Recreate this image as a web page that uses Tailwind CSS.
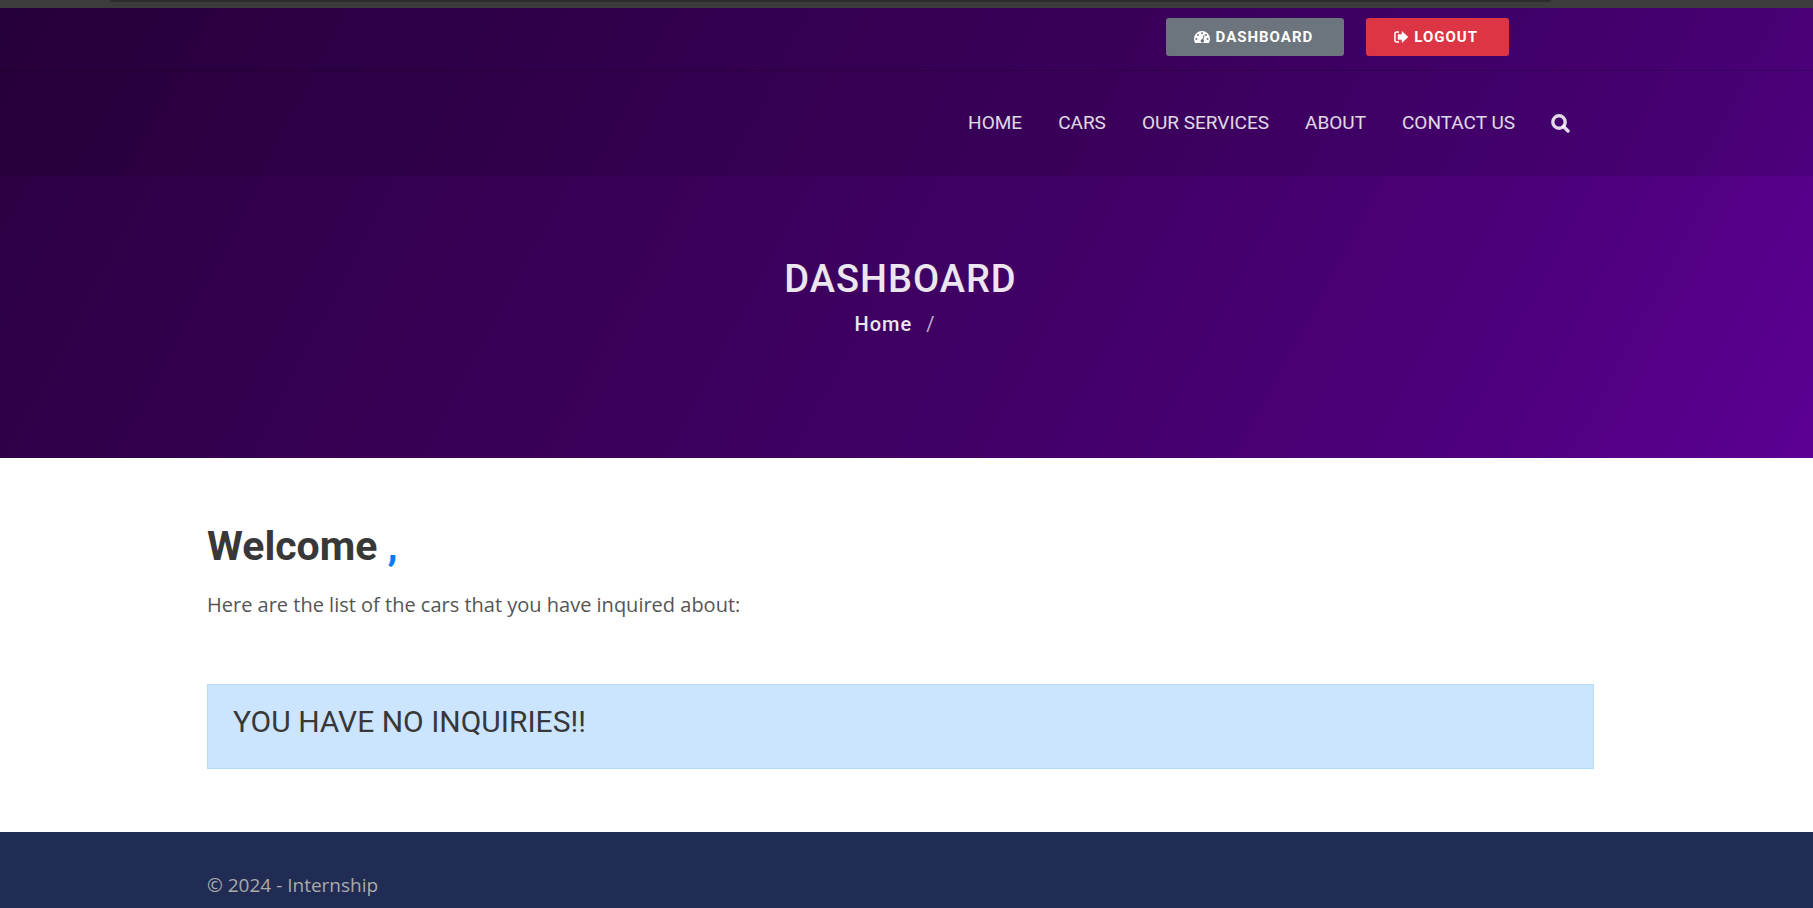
<!DOCTYPE html>
<html lang="en">
<head>
<meta charset="utf-8">
<meta name="viewport" content="width=device-width, initial-scale=1">
<title>Dashboard</title>
<script src="https://cdn.jsdelivr.net/npm/@tailwindcss/browser@4"></script>
</head>
<body class="min-h-screen overflow-x-hidden bg-white font-['Open_Sans',sans-serif] text-xl text-[#555]">
<div class="flex h-2 items-start bg-[#3c3c3c] pl-[110px] pr-[262px]"><div class="h-[2px] flex-1 rounded-b-sm bg-[#2c2c2c]"></div></div>
<header class="bg-[linear-gradient(118deg,#2b0041_0%,#410066_58%,#4d007c_82%,#5c0094_100%)] font-['Roboto',sans-serif] text-white">
  <div class="h-[63px] border-b border-black/20 bg-black/10 pr-3 pt-[10px]">
    <div class="mx-auto flex w-full max-w-[1387px] justify-end gap-[22px] pr-[85px]">
      <a href="#" class="flex h-[38px] items-center gap-[6px] rounded-[3px] bg-[#6c757d] pl-7 pr-[31px] text-[15px] font-bold tracking-[1px]">
        <svg class="h-4 w-4" viewBox="0 0 16 16" fill="currentColor" aria-hidden="true"><path fill-rule="evenodd" d="M8 2a8 8 0 0 0-8 8c0 1.500.4 2.800 1.100 4h13.800a8 8 0 0 0 1.100-4 8 8 0 0 0-8-8zM8 3.300a1 1 0 1 1 0 2 1 1 0 0 1 0-2zM4 5a1 1 0 1 1 0 2 1 1 0 0 1 0-2zM2.400 9a1 1 0 1 1 0 2 1 1 0 0 1 0-2zM13.600 9a1 1 0 1 1 0 2 1 1 0 0 1 0-2zM12 5a1 1 0 1 1 0 2 1 1 0 0 1 0-2zM9.700 5.800l.9.3-1.200 4.300a1.800 1.800 0 1 1-1-.3z"/></svg>
        DASHBOARD</a>
      <a href="#" class="flex h-[38px] items-center gap-[6px] rounded-[3px] bg-[#dc3545] pl-7 pr-[31px] text-[15px] font-bold tracking-[1px]">
        <svg class="h-[14px] w-[14px]" viewBox="0 0 14 14" aria-hidden="true"><path d="M5 2H2.800A2 2 0 0 0 .9 4v6a2 2 0 0 0 1.900 2H5" fill="none" stroke="currentColor" stroke-width="1.500"/><path d="M8 1.500 14 7l-6 5.500V9.600H4V4.400h4z" fill="currentColor" stroke="currentColor" stroke-width=".5" stroke-linejoin="round"/></svg>
        LOGOUT</a>
    </div>
  </div>
  <div class="h-[105px] bg-black/10 pr-3">
    <nav class="mx-auto flex h-full w-full max-w-[1387px] items-center justify-end gap-9 pr-6 text-[19px] text-white/85">
      <a href="#">HOME</a><a href="#">CARS</a><a href="#">OUR SERVICES</a><a href="#">ABOUT</a><a href="#">CONTACT US</a>
      <button type="button" aria-label="Search"><svg class="h-[19px] w-[19px]" viewBox="0 0 19 19" fill="none" stroke="currentColor" stroke-width="3.400" stroke-linecap="round" aria-hidden="true"><circle cx="8" cy="8" r="6.200"/><path d="m12.800 12.800 4.200 4.200"/></svg></button>
    </nav>
  </div>
  <div class="flex h-[282px] flex-col items-center pr-3 pt-[79px] text-white/90">
    <h1 class="text-[38px] leading-[48px] font-medium tracking-[1px]">DASHBOARD</h1>
    <div class="mt-[6px] flex gap-[14px] pr-3 text-[20px] leading-[30px]"><a href="#" class="font-medium tracking-[1px]">Home</a><span class="text-white/70">/</span></div>
  </div>
</header>
<main class="pr-3">
  <div class="mx-auto max-w-[1387px] pt-[63px] pb-[63px]">
    <h2 class="font-['Roboto',sans-serif] text-[41px] leading-[50px] font-bold text-[#383838]">Welcome <span class="text-[#007bff]">,</span></h2>
    <p class="mt-[19px] leading-[30px]">Here are the list of the cars that you have inquired about:</p>
    <div class="mt-16 h-[85px] border border-[#b8daff] bg-[#cce5ff] px-[25px] pt-[18px]" role="alert">
      <h3 class="font-['Roboto',sans-serif] text-[30px] leading-[38px] text-[#383838]">YOU HAVE NO INQUIRIES!!</h3>
    </div>
  </div>
</main>
<footer class="bg-[#212c55] pr-3 pt-[38px] pb-[9px]">
  <p class="mx-auto max-w-[1387px] text-[19px] leading-[30px] text-[#aaa]">© 2024 - Internship</p>
</footer>
</body>
</html>
